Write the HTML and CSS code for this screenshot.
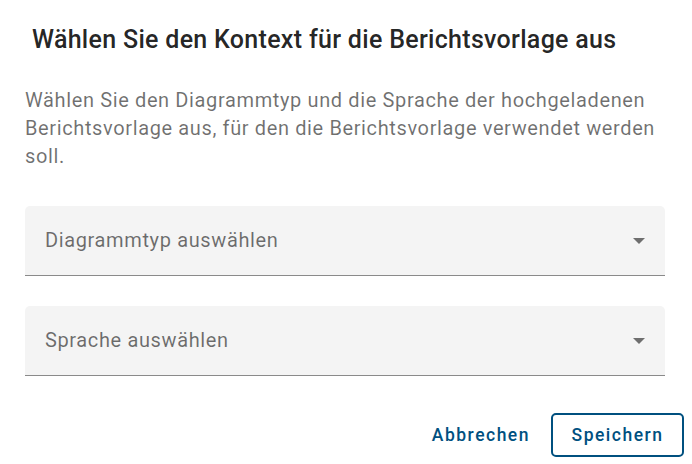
FILE: index.html
```html
<!DOCTYPE html>
<html lang="de">
<head>
<meta charset="utf-8">
<link rel="stylesheet" href="styles.css">
</head>
<body>
<div class="dialog">
  <h2 class="title">Wählen Sie den Kontext für die Berichtsvorlage aus</h2>
  <p class="desc">Wählen Sie den Diagrammtyp und die Sprache der hochgeladenen Berichtsvorlage aus, für den die Berichtsvorlage verwendet werden soll.</p>
  <div class="fields">
    <div class="field">
      <span class="placeholder">Diagrammtyp auswählen</span>
      <span class="arrow"></span>
    </div>
    <div class="field">
      <span class="placeholder">Sprache auswählen</span>
      <span class="arrow"></span>
    </div>
  </div>
  <div class="actions">
    <button class="btn btn-text">Abbrechen</button>
    <button class="btn btn-outline">Speichern</button>
  </div>
</div>
</body>
</html>
```
FILE: styles.css
```css
* { box-sizing: border-box; }
html, body { margin: 0; padding: 0; background: #fff; }
body { font-family: Roboto, "Noto Sans", sans-serif; }
.dialog {
  width: 692px;
  height: 464px;
  padding: 24px 8px 0 25px;
  display: flex;
  flex-direction: column;
}
.title {
  margin: 0 0 0 7px;
  font-size: 25px;
  font-weight: 500;
  line-height: 32px;
  color: rgba(0,0,0,0.87);
  letter-spacing: 0.3px;
}
.desc {
  margin: 30px 0 0 0;
  width: 640px;
  font-size: 20px;
  line-height: 28px;
  color: rgba(0,0,0,0.56);
  letter-spacing: 0.625px;
}
.fields {
  margin-top: 36px;
  display: flex;
  flex-direction: column;
  gap: 30px;
}
.field {
  width: 640px;
  height: 70px;
  background: #f4f4f4;
  border-radius: 5px 5px 0 0;
  border-bottom: 1px solid #8a8a8a;
  display: flex;
  align-items: center;
  padding: 0 20px 0 20px;
  justify-content: space-between;
}
.placeholder {
  font-size: 20px;
  color: rgba(0,0,0,0.56);
  letter-spacing: 0.625px;
  padding-bottom: 1px;
}
.arrow {
  width: 0; height: 0;
  border-left: 6px solid transparent;
  border-right: 6px solid transparent;
  border-top: 6px solid #6e6e6e;
}
.actions {
  margin-top: 37px;
  display: flex;
  justify-content: flex-end;
  gap: 5px;
}
.btn {
  font-family: Roboto, "Noto Sans", sans-serif;
  font-size: 17.5px;
  font-weight: 500;
  letter-spacing: 1.5px;
  color: #00507f;
  background: transparent;
  height: 44px;
  border-radius: 5px;
  cursor: pointer;
}
.btn-text {
  border: none;
  padding: 0 16px;
}
.btn-outline {
  border: 2px solid #00507f;
  padding: 0 18px;
  width: 133px;
}
```
